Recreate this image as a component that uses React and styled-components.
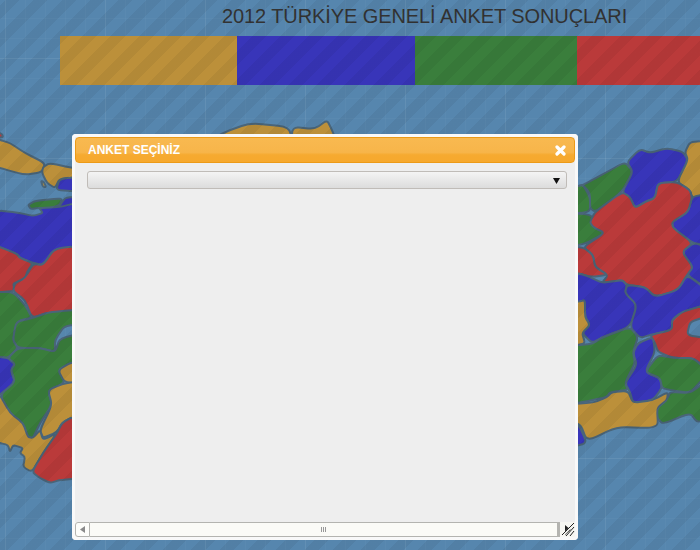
import React from "react"
import styled, { createGlobalStyle } from "styled-components"

const GlobalStyle = createGlobalStyle`
  html, body {
    margin: 0;
    height: 100%;
    overflow: hidden;
  }
  body {
    font-family: "Liberation Sans", Arial, sans-serif;
    background-color: #5686ae;
    background-image:
      linear-gradient(rgba(255, 255, 255, 0.05) 1px, transparent 1px),
      linear-gradient(90deg, rgba(255, 255, 255, 0.05) 1px, transparent 1px),
      linear-gradient(rgba(255, 255, 255, 0.022) 1px, transparent 1px),
      linear-gradient(90deg, rgba(255, 255, 255, 0.022) 1px, transparent 1px);
    background-size: 100px 100px, 100px 100px, 20px 20px, 20px 20px;
    background-position: 5px 58px, 5px 58px, 5px 18px, 5px 18px;
  }
`

const colors = {
  orange: "#bc903a",
  blue: "#3835b9",
  green: "#3a7e3c",
  red: "#ba3a3a",
  water: "#5686ae",
}

const parties = [
  { name: "a", color: colors.orange, width: 177 },
  { name: "b", color: colors.blue, width: 178 },
  { name: "c", color: colors.green, width: 162 },
  { name: "d", color: colors.red, width: 123 },
]

const regions = [
  // west
  ["orange", "-5,137 0,140 10,143 25,153 45,163 42,172 25,175 0,168 -5,167"],
  ["red", "-3,132 2,134 3,137 -3,138"],
  ["orange", "43,167 50,163 72,168 100,170 100,177 60,178 55,188 47,183 42,173"],
  ["orange", "41,181 44,182 46,187 43,187"],
  ["blue", "100,177 60,178 56,190 72,191 100,191"],
  ["green", "28,205 35,201 62,198 60,205 50,208 38,208 31,209"],
  ["blue", "60,205 65,198 72,197 100,197 100,203 60,208"],
  ["blue", "-5,210 20,213 33,216 43,213 39,208 60,207 72,204 100,200 100,247 55,248 43,265 33,263 20,258 17,254 0,247 -5,247"],
  ["red", "-5,247 0,247 17,254 20,258 33,263 27,272 25,280 13,283 15,291 0,292 -5,292"],
  ["red", "33,264 43,265 55,248 100,245 100,310 50,312 32,318 25,300 13,291 15,283 25,278"],
  ["green", "-5,292 13,292 25,305 32,318 20,320 16,325 13,340 18,348 8,358 0,357 -5,357"],
  ["green", "16,322 32,318 50,312 100,308 100,325 65,325 55,340 55,352 40,348 18,348 13,340"],
  ["blue", "-5,357 0,357 8,358 15,364 11,370 15,382 0,395 -5,395"],
  ["green", "8,358 18,348 40,348 55,352 60,338 100,330 100,362 72,362 58,370 65,383 48,390 52,405 40,423 33,438 28,437 23,423 10,413 0,395 15,382 11,370 15,364"],
  ["orange", "100,360 72,362 58,370 65,383 100,383"],
  ["orange", "65,383 100,380 100,415 72,417 62,423 57,432 43,438 40,430 52,405 48,390"],
  ["orange", "-5,395 0,395 10,413 23,423 28,437 33,438 40,430 43,440 57,433 43,453 32,472 23,467 25,457 20,453 23,448 13,445 10,452 8,445 0,443 -5,443"],
  ["red", "100,415 72,417 62,423 57,433 43,453 32,472 40,478 50,483 60,480 100,477"],
  // north
  ["orange", "200,150 222,133 250,123 290,127 292,150"],
  ["orange", "292,150 292,127 315,129 327,120 332,130 340,150"],
  // east
  ["green", "550,200 583,185 607,172 625,162 633,172 622,192 595,212 590,208 590,193 583,185 578,186 550,190"],
  ["green", "550,190 578,186 583,185 590,197 590,213 550,213"],
  ["blue", "627,162 640,149 650,153 667,148 683,152 688,160 677,182 658,183 655,198 645,202 635,208 630,197 622,192 633,172"],
  ["orange", "677,182 688,160 685,152 690,142 705,141 705,201 692,197 690,190"],
  ["green", "550,213 592,214 593,227 605,233 583,245 550,246"],
  ["blue", "692,197 705,194 705,245 693,243 673,228 672,222 688,212"],
  ["blue", "682,252 693,243 705,246 705,287 687,275 693,267"],
  ["red", "595,212 622,192 630,197 635,208 645,202 655,198 658,183 677,182 690,190 692,198 688,212 672,222 673,228 693,243 682,252 693,267 687,275 678,290 655,297 645,287 627,285 622,280 602,283 608,275 595,267 593,255 583,247 605,233 593,227 590,222"],
  ["red", "550,246 583,247 593,255 595,267 608,275 590,277 578,273 550,273"],
  ["blue", "550,278 578,273 590,277 602,283 622,280 627,285 625,293 637,305 630,327 603,337 592,343 582,333 590,325 585,317 585,300 578,302 550,302"],
  ["orange", "550,302 578,302 585,300 585,317 590,325 582,333 585,343 578,345 550,345"],
  ["blue", "627,285 645,287 655,297 678,290 687,275 705,288 705,305 682,312 672,320 672,330 650,335 640,338 630,327 637,305 625,293"],
  ["red", "650,335 672,330 672,320 682,312 705,305 705,367 693,358 673,358 658,352 655,343"],
  ["water", "705,317 690,322 687,335 705,338"],
  ["green", "550,345 578,345 592,344 603,337 630,327 638,337 633,352 635,363 625,383 628,390 610,392 607,397 593,400 578,403 550,405"],
  ["blue", "638,343 653,337 655,352 645,372 660,378 662,388 653,400 633,403 630,392 625,383 637,365 633,353"],
  ["green", "645,372 658,355 673,358 693,358 705,368 705,377 690,393 670,390 662,388 660,378"],
  ["green", "670,392 690,393 705,382 705,420 697,422 690,413 663,424 657,418 656,408 668,398"],
  ["orange", "550,405 593,403 607,397 612,392 628,391 633,403 653,400 668,392 667,400 657,408 658,425 650,428 617,427 587,441 580,423 550,420"],
  ["blue", "550,423 578,423 587,443 572,447 550,447"],
]

// rounds each corner of a region outline so the borders read as hand drawn
const roundedPath = (points) => {
  const pts = points.split(" ").map((p) => p.split(",").map(Number))
  const near = (a, b) => [a[0] + (b[0] - a[0]) * 0.3, a[1] + (b[1] - a[1]) * 0.3]
  return (
    pts
      .map((p, i) => {
        const start = near(p, pts[(i - 1 + pts.length) % pts.length])
        const end = near(p, pts[(i + 1) % pts.length])
        return `${i ? "L" : "M"}${start[0]} ${start[1]} Q${p[0]} ${p[1]} ${end[0]} ${end[1]}`
      })
      .join(" ") + " Z"
  )
}

const Page = styled.div`
  position: relative;
  width: 700px;
  height: 550px;
  overflow: hidden;
`

const Header = styled.header`
  position: relative;
  z-index: 1;
  padding-left: 60px;
`

const Title = styled.h1`
  margin: 0 0 0 162px;
  height: 36px;
  color: #333;
  font-size: 20px;
  font-weight: 400;
  letter-spacing: -0.09px;
  line-height: 33px;
  white-space: nowrap;
`

const ResultBar = styled.div`
  display: flex;
  height: 49px;
`

const Segment = styled.div`
  flex: none;
  width: ${({ $width }) => $width}px;
  background: ${({ $color }) => $color};
`

const MapCanvas = styled.svg`
  position: absolute;
  inset: 0;
`

const Stripes = styled.div`
  position: absolute;
  inset: 0;
  z-index: 2;
  background: repeating-linear-gradient(
    -45deg,
    transparent 0 10px,
    rgba(0, 0, 0, 0.05) 10px 20px
  );
`

const Dialog = styled.section`
  position: absolute;
  z-index: 3;
  top: 134px;
  left: 72px;
  box-sizing: border-box;
  display: flex;
  flex-direction: column;
  width: 506px;
  height: 406px;
  padding: 3px;
  background: #eeeeee;
  border-radius: 4px;
  box-shadow: inset 0 0 0 3px #f9f9f9;
`

const DialogHeader = styled.div`
  box-sizing: border-box;
  display: flex;
  align-items: center;
  justify-content: space-between;
  height: 26px;
  padding: 0 8px 0 12px;
  background: linear-gradient(#f8b950 0, #f7b54a 60%, #f6aa30 70%, #f6a82d 100%);
  border: 1px solid #ec9a17;
  border-radius: 4px;
`

const DialogTitle = styled.span`
  color: #fff;
  font-size: 12px;
  font-weight: 700;
`

const DialogBody = styled.div`
  flex: 1;
  padding: 8px 8px 0 12px;
`

const SelectBox = styled.div`
  box-sizing: border-box;
  display: flex;
  align-items: center;
  justify-content: flex-end;
  height: 18px;
  padding-right: 6px;
  background: linear-gradient(#f4f4f4, #dcdcdc);
  border: 1px solid #c0bcb8;
  border-radius: 3px;
`

const ScrollBar = styled.div`
  display: flex;
  align-items: stretch;
  height: 15px;
  background: #f6f6f2;
`

const ScrollButton = styled.div`
  box-sizing: border-box;
  display: flex;
  align-items: center;
  justify-content: center;
  width: 15px;
  border: 1px solid #b4b4b0;
  border-radius: 3px 0 0 3px;
  background: #fdfdfa;
`

const ScrollTrack = styled.div`
  box-sizing: border-box;
  flex: 1;
  display: flex;
  align-items: center;
  justify-content: center;
  gap: 1px;
  border: solid #b4b4b0;
  border-width: 1px 3px 1px 0;
  background: #fbfbf7;
`

const Grip = styled.i`
  width: 1px;
  height: 5px;
  background: #999;
`

const ResizeCorner = styled.svg`
  flex: none;
  display: block;
`

export default function App() {
  return (
    <Page>
      <GlobalStyle />
      <MapCanvas width="700" height="550" viewBox="0 0 700 550">
        {regions.map(([fill, points], i) => (
          <path
            key={i}
            d={roundedPath(points)}
            fill={colors[fill]}
            stroke="#4a6579"
            strokeWidth="2"
            strokeLinejoin="round"
          />
        ))}
      </MapCanvas>
      <Header>
        <Title>2012 TÜRKİYE GENELİ ANKET SONUÇLARI</Title>
        <ResultBar>
          {parties.map((party) => (
            <Segment key={party.name} $width={party.width} $color={party.color} />
          ))}
        </ResultBar>
      </Header>
      <Stripes />
      <Dialog>
        <DialogHeader>
          <DialogTitle>ANKET SEÇİNİZ</DialogTitle>
          <svg width="11" height="11" viewBox="0 0 11 11">
            <path d="M2 2 L9 9 M9 2 L2 9" stroke="#fff" strokeWidth="3.2" strokeLinecap="round" />
          </svg>
        </DialogHeader>
        <DialogBody>
          <SelectBox>
            <svg width="7" height="7" viewBox="0 0 7 7">
              <path d="M0 1 H7 L3.5 7 Z" fill="#111" />
            </svg>
          </SelectBox>
        </DialogBody>
        <ScrollBar>
          <ScrollButton>
            <svg width="5" height="7" viewBox="0 0 5 7">
              <path d="M5 0 V7 L0 3.5 Z" fill="#8a8a8a" />
            </svg>
          </ScrollButton>
          <ScrollTrack>
            <Grip />
            <Grip />
            <Grip />
          </ScrollTrack>
          <ResizeCorner width="15" height="15" viewBox="0 0 15 15">
            <path d="M5 3 L11 8 L5 13 Z" fill="#222" />
            <path d="M14 2 L3 13 M14 6 L7 13 M14 10 L11 13" stroke="#f6f6f2" strokeWidth="2.2" />
            <path d="M14 1 L2 13 M14 5 L6 14 M14 9 L10 14" stroke="#222" strokeWidth="1" />
          </ResizeCorner>
        </ScrollBar>
      </Dialog>
    </Page>
  )
}
